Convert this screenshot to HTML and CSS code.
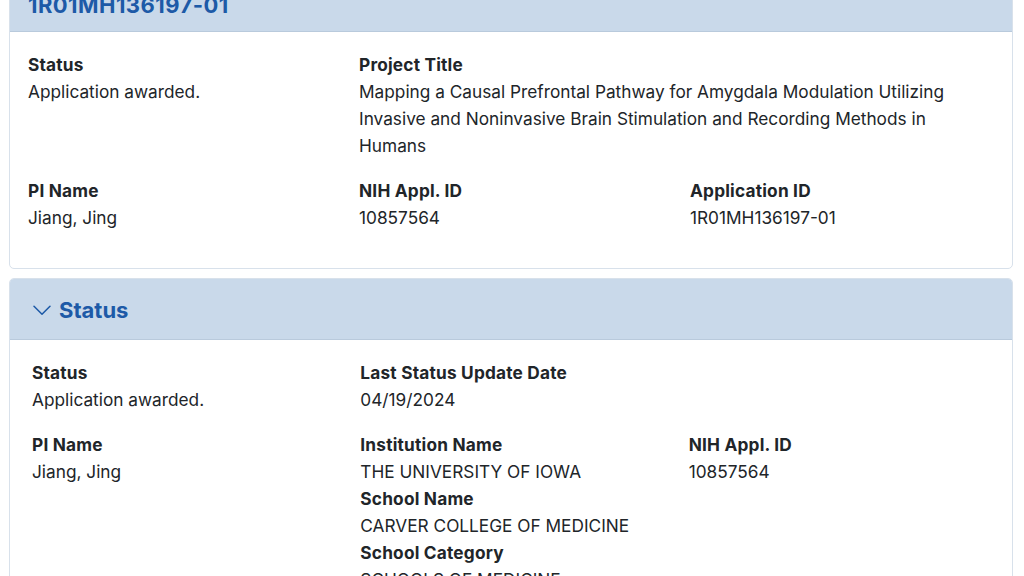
FILE: index.html
```html
<!DOCTYPE html>
<html lang="en">
<head>
<meta charset="utf-8">
<title>1R01MH136197-01</title>
<link rel="stylesheet" href="styles.css">
</head>
<body>
<main class="page">
  <section class="card card-summary">
    <header class="card-head card-head-plain">
      <h2 class="card-title title-id">1R01MH136197-01</h2>
    </header>
    <div class="card-body grid grid-summary">
      <div class="field">
        <div class="label">Status</div>
        <div class="value">Application awarded.</div>
      </div>
      <div class="field span-2">
        <div class="label">Project Title</div>
        <div class="value">Mapping a Causal Prefrontal Pathway for Amygdala Modulation Utilizing Invasive and Noninvasive Brain Stimulation and Recording Methods in Humans</div>
      </div>
      <div class="field">
        <div class="label">PI Name</div>
        <div class="value">Jiang, Jing</div>
      </div>
      <div class="field">
        <div class="label">NIH Appl. ID</div>
        <div class="value">10857564</div>
      </div>
      <div class="field">
        <div class="label">Application ID</div>
        <div class="value">1R01MH136197-01</div>
      </div>
    </div>
  </section>

  <section class="card card-status">
    <header class="card-head">
      <svg class="chevron" width="18" height="11" viewBox="0 0 18 11" aria-hidden="true">
        <path d="M1 1.2 L9 9.2 L17 1.2" fill="none" stroke="currentColor" stroke-width="1.5" stroke-linecap="round" stroke-linejoin="round"/>
      </svg>
      <h2 class="card-title">Status</h2>
    </header>
    <div class="card-body grid grid-status">
      <div class="field">
        <div class="label">Status</div>
        <div class="value">Application awarded.</div>
      </div>
      <div class="field span-2">
        <div class="label">Last Status Update Date</div>
        <div class="value">04/19/2024</div>
      </div>
      <div class="field">
        <div class="label">PI Name</div>
        <div class="value">Jiang, Jing</div>
      </div>
      <div class="field">
        <div class="label">Institution Name</div>
        <div class="value">THE UNIVERSITY OF IOWA</div>
        <div class="label">School Name</div>
        <div class="value">CARVER COLLEGE OF MEDICINE</div>
        <div class="label">School Category</div>
        <div class="value">SCHOOLS OF MEDICINE</div>
      </div>
      <div class="field">
        <div class="label">NIH Appl. ID</div>
        <div class="value">10857564</div>
      </div>
    </div>
  </section>
</main>
</body>
</html>
```

FILE: styles.css
```css
* { box-sizing: border-box; }

html, body {
  margin: 0;
  padding: 0;
  background: #ffffff;
  overflow: hidden;
}

body {
  font-family: Inter, "Noto Sans", "DejaVu Sans", sans-serif;
  color: #212529;
  font-size: 17.25px;
  line-height: 27px;
}

.page {
  padding: 0 11px 0 9px;
  margin-top: -20px;
}

.card {
  border: 1px solid #d8e1eb;
  border-radius: 5px;
  background: #ffffff;
  overflow: hidden;
}

.card + .card {
  margin-top: 9px;
}

.card-head {
  display: flex;
  align-items: center;
  gap: 8px;
  background: #c9d9ea;
  border-bottom: 1px solid #b9cadc;
  padding: 18px 23px 16px;
  color: #1d5aa7;
}

.card-head-plain {
  padding: 11px 18px 13px;
}

.card-title {
  margin: 0;
  font-size: 22px;
  line-height: 26px;
  font-weight: 700;
  color: #1d5aa7;
  letter-spacing: 0;
}

.title-id {
  letter-spacing: 0.45px;
}

.chevron {
  display: block;
  color: #1d5aa7;
  flex: none;
  margin-top: 1px;
}

.card-body {
  padding: 19px 18px 19px 18px;
}

.grid {
  display: grid;
  grid-template-columns: repeat(3, 1fr);
  column-gap: 27px;
}

.grid-status {
  padding-left: 22px;
  padding-right: 22px;
}

.span-2 {
  grid-column: span 2;
}

.field {
  margin-bottom: 18px;
}

.label {
  font-weight: 700;
  letter-spacing: 0.2px;
}

.value {
  font-weight: 400;
}
```
